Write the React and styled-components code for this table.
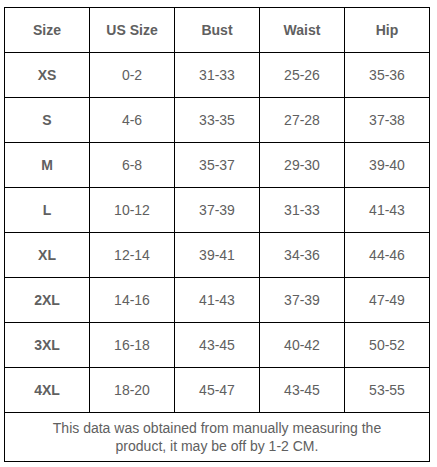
import styled, { createGlobalStyle } from 'styled-components';

const GlobalStyle = createGlobalStyle`
  body {
    margin: 0;
    background: #fff;
    font-family: "Liberation Sans", Arial, sans-serif;
  }
`

const rows = [
  ['XS', '0-2', '31-33', '25-26', '35-36'],
  ['S', '4-6', '33-35', '27-28', '37-38'],
  ['M', '6-8', '35-37', '29-30', '39-40'],
  ['L', '10-12', '37-39', '31-33', '41-43'],
  ['XL', '12-14', '39-41', '34-36', '44-46'],
  ['2XL', '14-16', '41-43', '37-39', '47-49'],
  ['3XL', '16-18', '43-45', '40-42', '50-52'],
  ['4XL', '18-20', '45-47', '43-45', '53-55'],
]

const heads = ['Size', 'US Size', 'Bust', 'Waist', 'Hip']

const App = () => {
  return (
    <Page>
      <GlobalStyle />
      <Chart>
        <tbody>
          <Row>
            {heads.map((h) => (
              <Cell key={h} bold>{h}</Cell>
            ))}
          </Row>
          {rows.map((r) => (
            <Row key={r[0]}>
              {r.map((v, i) => (
                <Cell key={i} bold={i === 0}>{v}</Cell>
              ))}
            </Row>
          ))}
          <Note>
            <NoteCell colSpan={5}>
              This data was obtained from manually measuring the<br />
              product, it may be off by 1-2 CM.
            </NoteCell>
          </Note>
        </tbody>
      </Chart>
    </Page>
  )
}

const Page = styled.div`
  padding: 7px 0 0 4px;
`

const Chart = styled.table`
  width: 426px;
  border-collapse: collapse;
  table-layout: fixed;
`

const Row = styled.tr`
  height: 45px;
`

const Cell = styled.td`
  border: 1px solid #000;
  text-align: center;
  vertical-align: middle;
  padding: 0;
  font-size: 14px;
  color: #606060;
  font-weight: ${(p) => (p.bold ? 'bold' : 'normal')};
`

const Note = styled.tr`
  height: 49px;
`

const NoteCell = styled.td`
  border: 1px solid #000;
  text-align: center;
  padding: 0;
  font-size: 14px;
  line-height: 18px;
  color: #606060;
`

export default App;
